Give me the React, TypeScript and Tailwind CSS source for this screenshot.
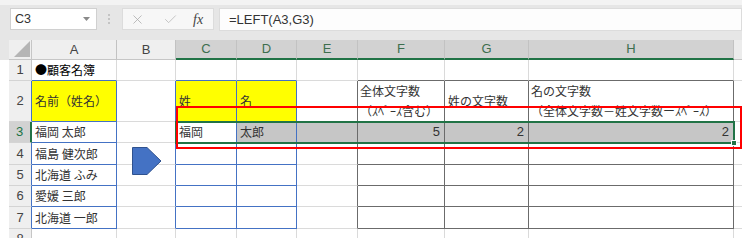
import { Check, X } from 'lucide-react'

type Tone = 'grid' | 'blue' | 'dark' | 'none'

const RIGHT: Record<Tone, string> = {
  grid: 'border-r border-r-[#dadada]',
  blue: 'border-r border-r-[#4472c4]',
  dark: 'border-r border-r-[#6b6b6b]',
  none: '',
}

const BOTTOM: Record<Tone, string> = {
  grid: 'border-b border-b-[#dadada]',
  blue: 'border-b border-b-[#4472c4]',
  dark: 'border-b border-b-[#6b6b6b]',
  none: '',
}

const LETTERS = ['A', 'B', 'C', 'D', 'E', 'F', 'G', 'H', '']
const ROWS = [1, 2, 3, 4, 5, 6, 7, 8]

const inBlue = (r: number, c: number) => r >= 2 && r <= 7 && (c === 1 || c === 3 || c === 4)
const inDark = (r: number, c: number) => r >= 2 && r <= 7 && c >= 6 && c <= 8

const tone = (a: [number, number], b: [number, number]): Tone => {
  if (inDark(...a) || inDark(...b)) return 'dark'
  if (inBlue(...a) || inBlue(...b)) return 'blue'
  return 'grid'
}

const YELLOW = ['2-1', '2-3', '2-4']
const SELECTED = ['3-4', '3-5', '3-6', '3-7', '3-8']

const TEXT: Record<string, string> = {
  '1-1': '●顧客名簿',
  '2-1': '名前（姓名）',
  '2-3': '姓',
  '2-4': '名',
  '2-7': '姓の文字数',
  '3-1': '福岡 太郎',
  '3-3': '福岡',
  '3-4': '太郎',
  '4-1': '福島 健次郎',
  '5-1': '北海道 ふみ',
  '6-1': '愛媛 三郎',
  '7-1': '北海道 一郎',
}

const NUMBERS: Record<string, string> = { '3-6': '5', '3-7': '2', '3-8': '2' }

const WRAPPED: Record<string, [string, string]> = {
  '2-6': ['全体文字数', '（ｽﾍﾟｰｽ含む）'],
  '2-8': ['名の文字数', '（全体文字数－姓文字数ーｽﾍﾟｰｽ）'],
}

function Cell({ r, c }: { r: number; c: number }) {
  const key = `${r}-${c}`
  const right = c === 9 ? 'none' : tone([r, c], [r, c + 1])
  const bottom = tone([r, c], [r + 1, c])
  const bg = YELLOW.includes(key) ? 'bg-[#ffff00]' : SELECTED.includes(key) ? 'bg-[#c6c6c6]' : 'bg-white'
  const align = r === 2 ? 'items-center' : 'items-end pb-[1px]'
  const color = r === 1 ? 'text-black' : 'text-[#333333]'

  return (
    <div className={`flex ${align} ${bg} ${RIGHT[right]} ${BOTTOM[bottom]} ${color} overflow-visible whitespace-nowrap text-[12px] leading-[18px]`}>
      {TEXT[key] && <span className="pl-[3px]">{TEXT[key]}</span>}
      {NUMBERS[key] && <span className="ml-auto pr-[4px] font-['Liberation_Sans'] text-[13px]">{NUMBERS[key]}</span>}
      {WRAPPED[key] && (
        <div className="flex flex-col pl-[2px] leading-[20px]">
          <span>{WRAPPED[key][0]}</span>
          <span>{WRAPPED[key][1]}</span>
        </div>
      )}
    </div>
  )
}

function FormulaBar() {
  return (
    <div className="w-[742px] h-[40px] bg-[#e6e6e6] border-t-[5px] border-t-[#f3f3f3] flex items-start pt-[3px] font-['Liberation_Sans']">
      <div className="ml-[10px] w-[87px] h-[22px] bg-white border border-[#d0d0d0] flex items-center pl-[4px] pr-[6px] text-[12.5px] text-[#333]">
        <span>C3</span>
        <svg className="ml-auto" width="7" height="4" viewBox="0 0 7 4">
          <path d="M0 0 L7 0 L3.5 4 Z" fill="#8a8a8a" />
        </svg>
      </div>
      <div className="ml-[11px] h-[22px] flex flex-col justify-center gap-[2px]">
        <span className="w-[2px] h-[2px] bg-[#c4c4c4]" />
        <span className="w-[2px] h-[2px] bg-[#c4c4c4]" />
        <span className="w-[2px] h-[2px] bg-[#c4c4c4]" />
      </div>
      <div className="ml-[12px] w-[92px] h-[22px] bg-[#f7f7f7] border border-[#dcdcdc] flex items-center">
        <X className="ml-[7px]" size={15} strokeWidth={1.2} color="#a8a8a8" />
        <Check className="ml-[18px]" size={15} strokeWidth={1.2} color="#b4b4b4" />
        <span className="ml-[15px] font-['Liberation_Serif'] italic text-[14px] text-[#444]">fx</span>
      </div>
      <div className="ml-[5px] flex-1 h-[23px] bg-[#fdfdfd] border border-[#dcdcdc] flex items-center pl-[9px] text-[13px] text-[#333]">
        =LEFT(A3,G3)
      </div>
    </div>
  )
}

export default function App() {
  return (
    <div className="w-[752px] h-[246px] bg-white overflow-hidden font-['Noto_Sans_CJK_JP','Noto_Sans',sans-serif]">
      <FormulaBar />
      <div className="flex w-[742px] h-[198px] overflow-hidden">
        <div className="w-[9px] flex flex-col">
          <div className="h-[20px] bg-[#e6e6e6]" />
        </div>
        <div className="relative">
          <div className="grid grid-cols-[23px_85px_59px_61px_60px_61px_87px_84px_205px_8px] grid-rows-[20px_21px_41px_21px_22px_21px_21px_22px_21px]">
            <div className="relative bg-[#efefef] border-r border-r-[#c6c6c6] border-b border-b-[#c6c6c6]">
              <svg className="absolute right-[1px] bottom-[2px]" width="16" height="16" viewBox="0 0 16 16">
                <path d="M16 0 L16 16 L0 16 Z" fill="#b5b5b5" />
              </svg>
            </div>
            {LETTERS.map((l, i) => {
              const sel = i >= 2 && i <= 7
              return (
                <div
                  key={i}
                  className={`flex items-center justify-center font-['Liberation_Sans'] text-[13px] ${
                    sel
                      ? 'bg-[#d2d2d2] text-[#3d6e4e] border-b-2 border-b-[#217346]'
                      : i === 8
                        ? 'bg-[#ececec] border-b border-b-[#c6c6c6]'
                        : 'bg-[#efefef] text-[#444] border-b border-b-[#c6c6c6]'
                  } ${i === 8 ? '' : 'border-r border-r-[#c2c2c2]'}`}
                >
                  {l}
                </div>
              )
            })}
            {ROWS.map((r) => [
              <div
                key={`h${r}`}
                className={`flex items-center justify-center font-['Liberation_Sans'] text-[13px] border-b border-b-[#d4d4d4] ${
                  r === 3
                    ? 'bg-[#d2d2d2] text-[#217346] border-r-2 border-r-[#217346]'
                    : r >= 2 && r <= 7
                      ? 'bg-[#efefef] text-[#444] border-r border-r-[#4472c4]'
                      : 'bg-[#efefef] text-[#444] border-r border-r-[#c6c6c6]'
                }`}
              >
                {r}
              </div>,
              ...[1, 2, 3, 4, 5, 6, 7, 8, 9].map((c) => <Cell key={`${r}-${c}`} r={r} c={c} />),
            ])}
          </div>

          {/* active selection C3:H3 */}
          <div className="absolute left-[166px] top-[81px] w-[560px] h-[23px] border-2 border-[#217346] pointer-events-none" />
          <div className="absolute left-[722px] top-[100px] w-[6px] h-[6px] bg-[#217346] border border-white" />

          {/* red highlight frame */}
          <div className="absolute left-[167px] top-[66px] w-[566px] h-[43px] border-2 border-[#ff0000] pointer-events-none" />

          {/* arrow shape */}
          <svg className="absolute left-[123px] top-[107px]" width="30" height="28" viewBox="0 0 30 28">
            <path d="M0.5 0.5 H15 L29 14 L15 27.5 H0.5 Z" fill="#4472c4" stroke="#2f528f" strokeWidth="1" />
          </svg>
        </div>
      </div>
    </div>
  )
}
